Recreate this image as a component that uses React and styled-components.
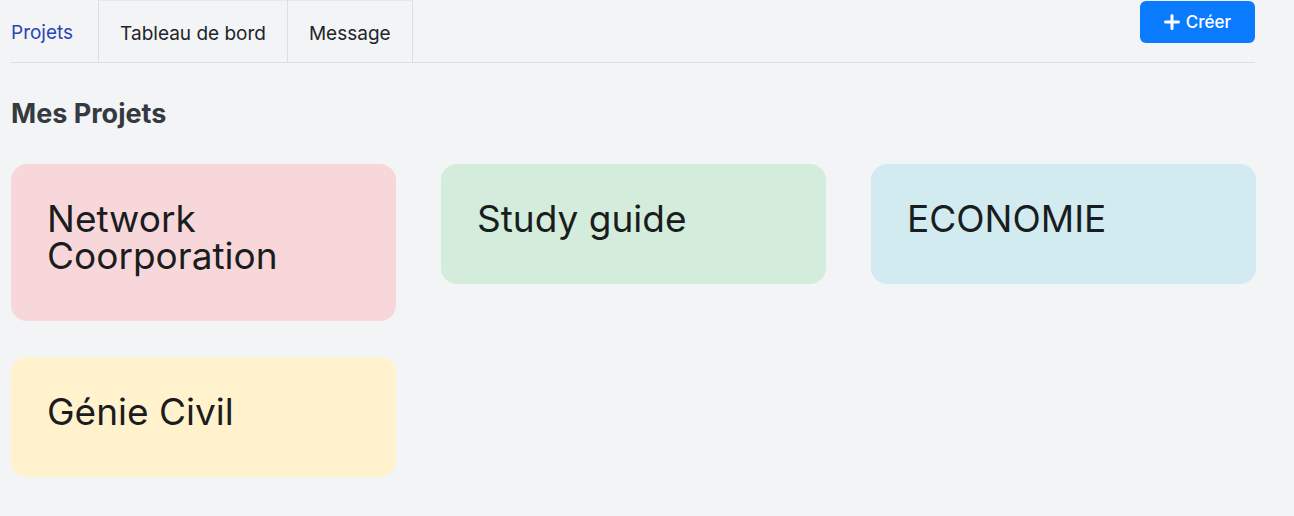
import React from 'react';
import styled, { createGlobalStyle } from 'styled-components';

const GlobalStyle = createGlobalStyle`
  body {
    margin: 0;
    background: #f3f4f6;
    font-family: Inter, "Noto Sans", sans-serif;
    color: #212529;
  }
`;

const Page = styled.div`
  padding: 0 39px 0 11px;
`;

const TopBar = styled.div`
  display: flex;
  align-items: flex-start;
  justify-content: space-between;
  height: 62px;
  border-bottom: 1px solid #dcdfe3;
`;

const Tabs = styled.div`
  display: flex;
  height: 62px;
`;

const Tab = styled.div`
  display: flex;
  align-items: center;
  padding: 3px 21px 0 21px;
  font-size: 19px;
  color: ${p => (p.active ? '#2b44b4' : '#212529')};
  border-right: 1px solid #dcdfe3;
  border-top: 1px solid #e6e8eb;
  &:first-child {
    padding-left: 0;
    padding-right: 25px;
    border-top: none;
  }
`;

const CreateButton = styled.button`
  display: flex;
  align-items: center;
  gap: 6px;
  margin-top: 1px;
  height: 42px;
  width: 115px;
  justify-content: center;
  background: #0a7bff;
  color: #ffffff;
  border: none;
  border-radius: 6px;
  font-family: Inter, sans-serif;
  font-size: 17px;
  font-weight: 500;
`;

const Title = styled.h2`
  margin: 36px 0 35px;
  font-size: 27px;
  font-weight: 700;
  color: #343a40;
  line-height: 30px;
`;

const Grid = styled.div`
  display: grid;
  grid-template-columns: repeat(3, 385px);
  column-gap: 45px;
  row-gap: 36px;
  align-items: start;
`;

const Card = styled.div`
  background: ${p => p.bg};
  border-radius: 16px;
  padding: 36px 36px 47px;
  font-size: 37px;
  line-height: 37px;
  font-weight: 400;
  color: #1a1d20;
`;

const projects = [
  { name: 'Network Coorporation', bg: '#f8d7da' },
  { name: 'Study guide', bg: '#d4ecdb' },
  { name: 'ECONOMIE', bg: '#d1ebf1' },
  { name: 'Génie Civil', bg: '#fff2cd' },
];

export default function App() {
  return (
    <Page>
      <GlobalStyle />
      <TopBar>
        <Tabs>
          <Tab active>Projets</Tab>
          <Tab>Tableau de bord</Tab>
          <Tab>Message</Tab>
        </Tabs>
        <CreateButton>
          <svg width="16" height="16" viewBox="0 0 16 16">
            <path d="M8 1.5v13M1.5 8h13" stroke="#fff" strokeWidth="3" strokeLinecap="round" />
          </svg>
          Créer
        </CreateButton>
      </TopBar>
      <Title>Mes Projets</Title>
      <Grid>
        {projects.map(p => (
          <Card key={p.name} bg={p.bg}>
            {p.name}
          </Card>
        ))}
      </Grid>
    </Page>
  );
}
